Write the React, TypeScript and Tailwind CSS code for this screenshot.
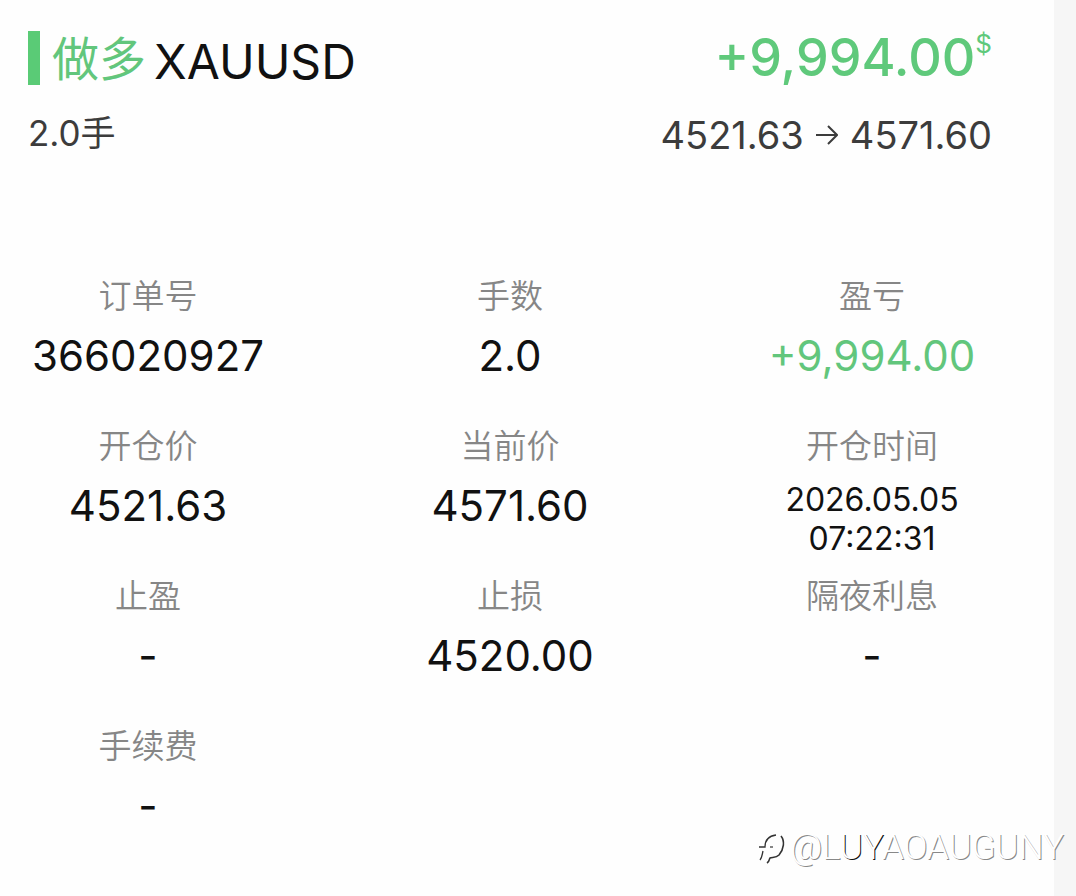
import React from 'react';

interface Field {
    label: string;
    value: string;
    tone?: 'profit' | 'date';
}

const fields: Field[] = [
    { label: '订单号', value: '366020927' },
    { label: '手数', value: '2.0' },
    { label: '盈亏', value: '+9,994.00', tone: 'profit' },
    { label: '开仓价', value: '4521.63' },
    { label: '当前价', value: '4571.60' },
    { label: '开仓时间', value: '2026.05.05 07:22:31', tone: 'date' },
    { label: '止盈', value: '-' },
    { label: '止损', value: '4520.00' },
    { label: '隔夜利息', value: '-' },
    { label: '手续费', value: '-' },
];

const valueStyles = {
    plain: 'text-[42px] leading-[60px] text-[#111111]',
    profit: 'text-[42px] leading-[60px] text-[#62c67c]',
    date: 'pt-1 text-[32px] leading-[39px] text-[#111111]',
};

function OrderField({ label, value, tone }: Field) {
    return (
        <div className="flex h-[150px] flex-col items-center text-center">
            <dt className="text-[33px] leading-[60px] font-[350] whitespace-nowrap text-[#868686]">{label}</dt>
            <dd className={valueStyles[tone ?? 'plain']}>{value}</dd>
        </div>
    );
}

function Watermark() {
    return (
        <div className="absolute right-3 bottom-7 flex items-center gap-1 text-white [text-shadow:1px_1px_0_#888888]">
            <svg className="h-9 w-7" viewBox="0 0 28 36" fill="none" stroke="#333333" aria-hidden="true">
                <path d="M1 17h6c0-7 3-11 11-12" strokeWidth="1.3" />
                <path d="M5 21c-1 4-1 7-3 9" strokeWidth="1.3" />
                <path d="M12 17h3" strokeWidth="1.2" />
                <path d="M23 6c4 5 3 13-2 19-3 3-7 2-9 3-1 1 0 3-3 5" strokeWidth="1.6" />
            </svg>
            <span className="font-['Roboto','Liberation_Sans',sans-serif] text-[35px] leading-10 font-light">
                @L<span className="[text-shadow:1px_1px_0_#111111]">UY</span>AOAUGUNY
            </span>
        </div>
    );
}

export default function App() {
    return (
        <div className="relative flex min-h-screen bg-[#f6f6f6] font-['Inter','Noto_Sans_CJK_SC',sans-serif]">
            <main className="mr-[22px] flex-1 bg-[#fefefe] pt-[26px] pr-[62px] pl-7">
                <header className="flex items-start justify-between">
                    <div>
                        <h1 className="flex h-16 items-center text-5xl text-[#111111]">
                            <span className="mr-3 h-[54px] w-3 bg-[#5acb76]" />
                            <span className="mr-2 text-[47px] text-[#62c67c]">做多</span>
                            <span className="pt-2">XAUUSD</span>
                        </h1>
                        <p className="mt-4 text-[35px] leading-[54px] text-[#3c3c3c]">2.0手</p>
                    </div>
                    <div className="text-right">
                        <p className="flex h-16 items-start justify-end font-medium text-[#5fc97b]">
                            <span className="text-[52px] leading-[64px]">+9,994.00</span>
                            <span className="text-[26px] leading-9 font-normal">$</span>
                        </p>
                        <p className="mt-4 flex items-center justify-end gap-3 text-[38px] leading-[58px] text-[#3c3c3c]">
                            <span>4521.63</span>
                            <svg className="h-5 w-[22px]" viewBox="0 0 22 20" fill="none" stroke="currentColor" strokeWidth="2" aria-label="至">
                                <path d="M0 10h21M12 1l9 9-9 9" />
                            </svg>
                            <span>4571.60</span>
                        </p>
                    </div>
                </header>

                <dl className="mt-[102px] grid grid-cols-3 gap-x-[122px]">
                    {fields.map((field) => (
                        <OrderField key={field.label} {...field} />
                    ))}
                </dl>
            </main>
            <Watermark />
        </div>
    );
}
